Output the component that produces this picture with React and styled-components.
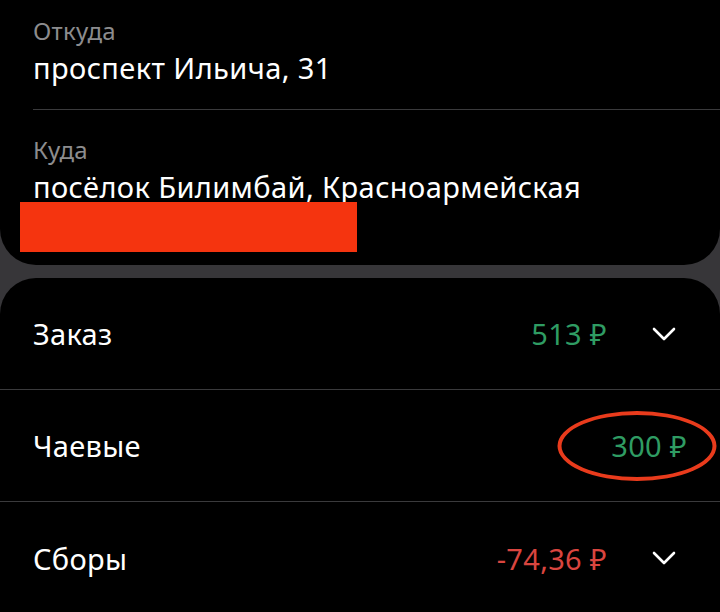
import styled, { createGlobalStyle } from 'styled-components';

const GlobalStyle = createGlobalStyle`
  html, body {
    margin: 0;
    padding: 0;
    background: #373639;
    font-family: 'Noto Sans', 'Open Sans', sans-serif;
    overflow: hidden;
  }
`;

const Screen = styled.div`
  width: 720px;
  height: 612px;
  display: flex;
  flex-direction: column;
  gap: 13px;
  overflow: hidden;
`;

const RouteCard = styled.div`
  background: #000;
  border-radius: 0 0 36px 36px;
  padding: 16px 0 13px 33px;
`;

const Point = styled.div`
  display: flex;
  flex-direction: column;
  padding-bottom: ${(p) => (p.last ? '0' : '19px')};
  border-bottom: ${(p) => (p.last ? 'none' : '1.5px solid #3a3a3c')};
  margin-bottom: ${(p) => (p.last ? '0' : '25px')};
`;

const Label = styled.div`
  color: #8c8c8e;
  font-size: 24px;
  line-height: 30px;
  letter-spacing: 0.3px;
`;

const Address = styled.div`
  color: #fff;
  font-size: 29px;
  line-height: 44px;
  letter-spacing: 0.4px;
`;

const Redacted = styled.div`
  width: 337px;
  height: 50px;
  background: #f5340f;
  margin-left: -13px;
  margin-top: -7px;
`;

const PriceCard = styled.div`
  background: #000;
  border-radius: 36px 36px 0 0;
  flex: 1;
`;

const Row = styled.div`
  height: 112px;
  display: flex;
  align-items: center;
  padding: 0 33px;
  border-bottom: ${(p) => (p.last ? 'none' : '1.5px solid #3a3a3c')};
  box-sizing: border-box;
`;

const RowTitle = styled.div`
  flex: 1;
  color: #fff;
  font-size: 29px;
  letter-spacing: 0.3px;
`;

const Amount = styled.div`
  position: relative;
  color: ${(p) => (p.negative ? '#d9453f' : '#2f9c63')};
  font-size: 29px;
  letter-spacing: 0.3px;
`;

const Circled = styled.div`
  position: absolute;
  left: 50%;
  top: 50%;
  width: 159px;
  height: 70px;
  box-sizing: border-box;
  transform: translate(calc(-50% - 12px), -50%);
  border: 4px solid #e93b1c;
  border-radius: 50%;
  pointer-events: none;
`;

const Chevron = styled.svg`
  width: 24px;
  height: 24px;
  margin-left: 45px;
  margin-right: 11px;
`;

function Arrow() {
  return (
    <Chevron viewBox="0 0 24 24" fill="none">
      <path d="M2 7L12 17L22 7" stroke="#fff" strokeWidth="2.6" strokeLinecap="round" strokeLinejoin="round" />
    </Chevron>
  );
}

export default function App() {
  return (
    <Screen>
      <GlobalStyle />
      <RouteCard>
        <Point>
          <Label>Откуда</Label>
          <Address>проспект Ильича, 31</Address>
        </Point>
        <Point last>
          <Label>Куда</Label>
          <Address>посёлок Билимбай, Красноармейская</Address>
          <Redacted />
        </Point>
      </RouteCard>
      <PriceCard>
        <Row>
          <RowTitle>Заказ</RowTitle>
          <Amount>513 ₽</Amount>
          <Arrow />
        </Row>
        <Row>
          <RowTitle>Чаевые</RowTitle>
          <Amount>
            300 ₽
            <Circled />
          </Amount>
        </Row>
        <Row last>
          <RowTitle>Сборы</RowTitle>
          <Amount negative>-74,36 ₽</Amount>
          <Arrow />
        </Row>
      </PriceCard>
    </Screen>
  );
}
